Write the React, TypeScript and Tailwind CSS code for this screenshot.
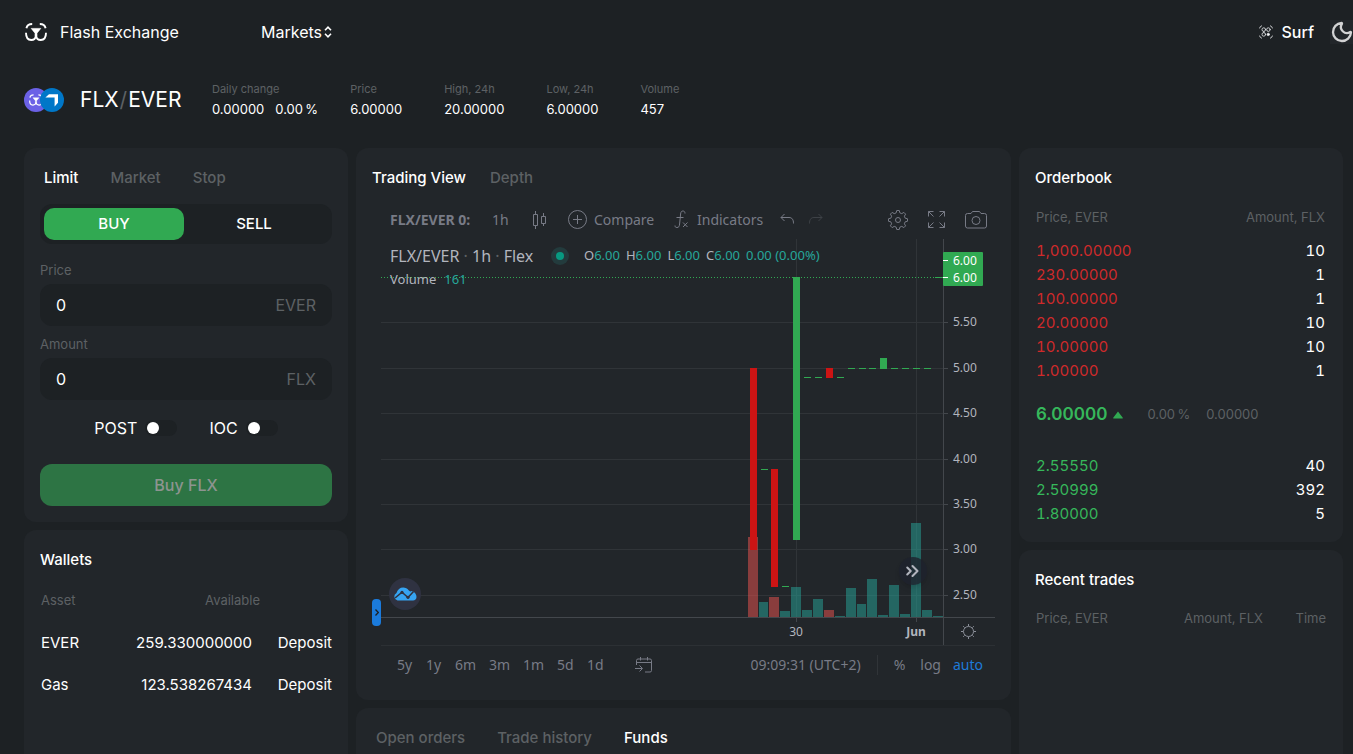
import type { ReactNode } from "react";
import { ChevronRight, Moon } from "lucide-react";

const inter = "font-['Inter',sans-serif]";
const chartFont = "font-['Noto_Sans',sans-serif]";

function BearMark({ className }: { className: string }) {
  return (
    <svg viewBox="0 0 22 18" className={className} fill="none" stroke="currentColor" strokeWidth="1.9">
      <path d="M1.4 5.2C2 2.400 4 1 7.200 1" />
      <path d="M20.600 5.200C20 2.400 18 1 14.800 1" />
      <path d="M1 9.800C1 14.400 3 17 6.200 17C8.800 17 10.600 15.600 11 12.600C11.400 15.600 13.200 17 15.800 17C19 17 21 14.400 21 9.800" />
      <path d="M6.200 5.400h9.600L12 10.200v3.200h-2v-3.200Z" fill="currentColor" strokeWidth="0.600" strokeLinejoin="round" />
    </svg>
  );
}

function SurfMark() {
  return (
    <svg viewBox="0 0 14 14" className="size-[14px]" fill="none" stroke="#d6d8da" strokeWidth="0.9" strokeLinecap="round">
      <circle cx="4.8" cy="4.6" r="1.8" />
      <circle cx="9.4" cy="4.6" r="1.8" />
      <circle cx="4.8" cy="9.4" r="1.8" />
      <circle cx="9.3" cy="9.4" r="1.2" fill="#fff" />
      <path d="M.6 3Q.8 1.400 2.600.8M13.400 3Q13.200 1.400 11.400.8M.6 11Q.8 12.600 2.600 13.200M13.400 11Q13.200 12.600 11.400 13.200" />
      <path d="M4.800 6.400v1.200" />
    </svg>
  );
}

function Header() {
  return (
    <header className="flex h-16 shrink-0 items-center pl-6">
      <a href="#home" className="flex w-[237px] items-center">
        <BearMark className="ml-px h-[18px] w-[22px]" />
        <span className="ml-[13px] text-base">Flash Exchange</span>
      </a>
      <button className="flex items-center gap-[2px] text-base">
        Markets
        <svg viewBox="0 0 8 12" className="h-3 w-2" fill="none" stroke="currentColor" strokeWidth="1.6">
          <path d="M1 4.2L4 1.2L7 4.2M1 7.8L4 10.8L7 7.8" />
        </svg>
      </button>
      <button className="ml-auto flex items-center gap-[9px] text-base font-medium">
        <SurfMark />
        Surf
      </button>
      <button aria-label="Dark theme" className="ml-4 flex h-6 w-[23px] items-center bg-[#22262a] text-[#d2d3d4]">
        <Moon className="size-6 shrink-0" strokeWidth={2.3} />
      </button>
    </header>
  );
}

function Stat({ label, values }: { label: string; values: string[] }) {
  return (
    <div className="mr-8">
      <dt className="text-[11px] leading-5 text-[#5d6164]">{label}</dt>
      <dd className="flex text-[13px] leading-5">
        {values.map((v) => (
          <span key={v} className="mr-[11px] last:mr-0">
            {v}
          </span>
        ))}
      </dd>
    </div>
  );
}

function PairBar() {
  return (
    <section className="flex h-[84px] shrink-0 pt-[15px] pl-6">
      <div className="flex h-[42px] w-[188px] items-center">
        <span className="flex size-6 items-center justify-center rounded-full bg-[#6b61e6]">
          <BearMark className="h-[12px] w-[14px]" />
        </span>
        <svg viewBox="0 0 24 24" className="-ml-2 size-6">
          <circle cx="12" cy="12" r="12" fill="#0077c8" />
          <path d="M5.4 9.6L9 6.2h9v8.6l-3.4 3.6V9.6Z" fill="#fff" />
        </svg>
        <h1 className="ml-4 flex gap-px text-[21px] leading-8">
          FLX<span className="text-[#5d6164]">/</span>EVER
        </h1>
      </div>
      <dl className="flex">
        <Stat label="Daily change" values={["0.00000", "0.00\u2009%"]} />
        <div className="flex gap-[10px]">
          <Stat label="Price" values={["6.00000"]} />
          <Stat label="High, 24h" values={["20.00000"]} />
          <Stat label="Low, 24h" values={["6.00000"]} />
          <Stat label="Volume" values={["457"]} />
        </div>
      </dl>
    </section>
  );
}

function Card({ children, className = "" }: { children: ReactNode; className?: string }) {
  return <section className={`rounded-xl bg-[#22262a] p-4 ${className}`}>{children}</section>;
}

function Field({ id, label, unit }: { id: string; label: string; unit: string }) {
  return (
    <div>
      <label htmlFor={id} className="block text-[13px] leading-5 text-[#5d6164]">
        {label}
      </label>
      <div className="mt-1 flex h-[42px] items-center rounded-xl bg-[#1d2124] px-4 text-base">
        <input id={id} defaultValue="0" className="min-w-0 flex-1 bg-transparent outline-none" />
        <span className="text-[#5d6164]">{unit}</span>
      </div>
    </div>
  );
}

function Toggle({ label }: { label: string }) {
  return (
    <label className="flex items-center gap-2 text-base">
      {label}
      <input type="checkbox" role="switch" className="peer sr-only" />
      <span className="flex h-4 w-8 items-center rounded-full bg-[#1d2124] px-[2px] peer-checked:justify-end">
        <span className="size-3 rounded-full bg-white" />
      </span>
    </label>
  );
}

function OrderForm() {
  return (
    <Card>
      <div className="flex h-7 items-center gap-8 px-1 text-[15px] font-medium text-[#5d6164]">
        <button className="text-white">Limit</button>
        <button>Market</button>
        <button>Stop</button>
      </div>
      <div className="mt-3 grid h-10 grid-cols-2 rounded-xl bg-[#1d2124] py-1 pr-2 pl-1 text-[15px] font-medium">
        <button className="rounded-[10px] bg-[#31a952]">BUY</button>
        <button>SELL</button>
      </div>
      <div className="mt-4 flex flex-col gap-2">
        <Field id="price" label="Price" unit="EVER" />
        <Field id="amount" label="Amount" unit="FLX" />
      </div>
      <div className="mt-4 flex h-6 items-center justify-center gap-8">
        <Toggle label="POST" />
        <Toggle label="IOC" />
      </div>
      <button className="mt-6 h-[42px] w-full rounded-xl bg-[#2d7444] text-base font-medium text-[#8d9490]">Buy FLX</button>
    </Card>
  );
}

function Wallets() {
  const rows = [
    ["EVER", "259.330000000"],
    ["Gas", "123.538267434"],
  ];
  return (
    <Card className="min-h-60 flex-1">
      <h2 className="h-7 text-[15px] leading-7 font-medium">Wallets</h2>
      <table className="mt-[6px] w-full text-[15px]">
        <thead className="text-[13px] text-[#5d6164]">
          <tr className="h-[42px]">
            <th className="pl-px text-left font-normal">Asset</th>
            <th className="pr-[72px] text-right font-normal" colSpan={2}>
              Available
            </th>
          </tr>
        </thead>
        <tbody>
          {rows.map(([name, value]) => (
            <tr key={name} className="h-[42px]">
              <td className="pl-px">{name}</td>
              <td className="text-right">{value}</td>
              <td className="w-20 text-right">
                <button>Deposit</button>
              </td>
            </tr>
          ))}
        </tbody>
      </table>
    </Card>
  );
}

const UP = "#31a952";
const DOWN = "#cc1414";
const priceLines: [number, string][] = [
  [83, "5.50"],
  [129, "5.00"],
  [174, "4.50"],
  [220, "4.00"],
  [265, "3.50"],
  [310, "3.00"],
  [356, "2.50"],
];
// x, top, height, rising
const candles: [number, number, number, boolean][] = [
  [369, 129, 182, false],
  [380, 230, 1, true],
  [390, 230, 118, false],
  [401, 347, 1, true],
  [412, 38, 263, true],
  [423, 138, 1, true],
  [434, 138, 1, true],
  [445, 129, 10, false],
  [456, 138, 1, true],
  [467, 129, 1, true],
  [478, 129, 1, true],
  [488, 129, 1, true],
  [499, 119, 11, true],
  [510, 129, 1, true],
  [521, 129, 1, true],
  [532, 129, 1, true],
  [543, 129, 1, true],
];
// x, width, height, rising
const volumes: [number, number, number, boolean][] = [
  [367, 10, 80, false],
  [378, 9, 15, true],
  [388, 10, 20, false],
  [399, 10, 6, true],
  [410, 10, 30, true],
  [421, 10, 7, true],
  [432, 10, 18, true],
  [443, 10, 7, false],
  [454, 10, 1, true],
  [465, 10, 29, true],
  [476, 9, 13, true],
  [486, 10, 38, true],
  [497, 10, 2, true],
  [508, 10, 32, true],
  [519, 10, 3, true],
  [530, 10, 94, true],
  [541, 10, 7, true],
  [552, 10, 1, true],
];

function PriceChart() {
  return (
    <svg viewBox="0 0 614 407" className={`block w-full ${chartFont}`} fontSize="12" fill="#b2b5be">
      <g fill="#303438">
        {priceLines.map(([y]) => (
          <rect key={y} x="0" y={y} width="562" height="1" />
        ))}
        <rect x="415" y="0" width="1" height="378" />
        <rect x="535" y="0" width="1" height="378" />
        <rect x="0" y="406" width="614" height="1" fill="#2c3034" />
      </g>
      {volumes.map(([x, w, h, up]) => (
        <rect key={x} x={x} y={378 - h} width={w} height={h} fill={up ? "#26a69a" : "#ef5350"} opacity="0.5" />
      ))}
      <g fill="#43474c">
        <rect x="562" y="0" width="1" height="406" />
        <rect x="0" y="378" width="614" height="1" />
        <rect x="415" y="378" width="1" height="5" />
        <rect x="535" y="378" width="1" height="5" />
        {priceLines.map(([y]) => (
          <rect key={y} x="562" y={y} width="5" height="1" />
        ))}
      </g>
      <path d="M0 38.5H554" stroke={UP} strokeDasharray="1 2" />
      <path d="M554 38.5H562" stroke={UP} />
      {candles.map(([x, y, h, up]) => (
        <rect key={x} x={x} y={y} width="7" height={h} fill={up ? UP : DOWN} />
      ))}
      {priceLines.map(([y, label]) => (
        <text key={y} x="572" y={y + 4}>
          {label}
        </text>
      ))}
      <rect x="562" y="13" width="40" height="34" rx="1" fill={UP} />
      <path d="M562 21.5h5M562 38.5h5" stroke="#fff" />
      <text x="572" y="26" fill="#fff">
        6.00
      </text>
      <text x="572" y="43" fill="#fff">
        6.00
      </text>
      <text x="415" y="397" textAnchor="middle">
        30
      </text>
      <text x="535" y="397" textAnchor="middle" fontWeight="700">
        Jun
      </text>
      <g fill="none" stroke="#8b8f99">
        <circle cx="587.5" cy="392.5" r="5" />
        <path d="M587.5 385v2M587.5 398v2M580 392.5h2M593 392.5h2M582.2 387.2l1.4 1.4M591.4 396.4l1.4 1.4M582.2 397.8l1.4-1.4M591.4 388.6l1.4-1.4" />
      </g>
    </svg>
  );
}

function ToolbarIcon({ w, h, children }: { w: string; h: string; children: ReactNode }) {
  return (
    <svg viewBox={`0 0 ${w} ${h}`} width={w} height={h} fill="none" stroke="currentColor" className="shrink-0">
      {children}
    </svg>
  );
}

const gearPath = (() => {
  const points: string[] = [];
  for (let i = 0; i < 8; i++) {
    [
      [-0.25, 7.4],
      [-0.13, 9.6],
      [0.13, 9.6],
      [0.25, 7.4],
    ].forEach(([offset, r]) => {
      const a = (i * Math.PI) / 4 + offset;
      points.push(`${(10 + r * Math.sin(a)).toFixed(2)} ${(10 - r * Math.cos(a)).toFixed(2)}`);
    });
  }
  return `M${points.join("L")}Z`;
})();

function ChartToolbar() {
  return (
    <div className={`flex h-[39px] items-center pr-2 pl-[18px] text-sm text-[#787b86] ${chartFont}`}>
      <button className="w-[102px] text-left font-bold">FLX/EVER 0:</button>
      <button className="w-10 text-left">1h</button>
      <button aria-label="Chart type" className="w-9">
        <ToolbarIcon w="15" h="20">
          <path d="M3.500 1v3M3.500 16v3M1.500 4.500h4v11h-4ZM11.500 3v3M11.500 13v3M9.500 6.500h4v7h-4Z" />
        </ToolbarIcon>
      </button>
      <button className="flex w-[106px] items-center gap-[6px]">
        <ToolbarIcon w="20" h="20">
          <circle cx="9.500" cy="9.500" r="9" />
          <path d="M5 9.500h9M9.500 5v9" />
        </ToolbarIcon>
        Compare
      </button>
      <button className="flex w-[106px] items-center gap-2">
        <ToolbarIcon w="15" h="19">
          <path d="M11 3.5C11 1.4 9.800 1 8.900 1C7.400 1 6.800 2 6.600 4L5.600 14C5.400 16.500 4.600 17.500 3 17.500C1.600 17.500 1 17 1 15.500M2.500 7.500h7M9 12.500l4.500 4.500M13.500 12.500L9 17" />
        </ToolbarIcon>
        Indicators
      </button>
      <button aria-label="Undo" className="w-7">
        <ToolbarIcon w="15" h="13">
          <path d="M4.500 1L1 4.500L4.500 8M1 4.500h8C12 4.500 13.500 6.500 13.500 10.500" />
        </ToolbarIcon>
      </button>
      <button aria-label="Redo" className="text-[#3d4146]">
        <ToolbarIcon w="15" h="13">
          <path d="M10.500 1L14 4.500L10.500 8M14 4.500H6C3 4.500 1.500 6.500 1.500 10.500" />
        </ToolbarIcon>
      </button>
      <div className="ml-auto flex items-center gap-5">
        <button aria-label="Settings">
          <ToolbarIcon w="20" h="20">
            <path d={gearPath} strokeLinejoin="round" />
            <circle cx="10" cy="10" r="2.5" />
          </ToolbarIcon>
        </button>
        <button aria-label="Full screen">
          <ToolbarIcon w="17" h="17">
            <path d="M.500 5.500v-5h5M.500.500l5 5M11.500.500h5v5M16.500.500l-5 5M.500 11.500v5h5M.500 16.500l5-5M16.500 11.500v5h-5M16.500 16.500l-5-5" />
          </ToolbarIcon>
        </button>
        <button aria-label="Take a snapshot">
          <ToolbarIcon w="22" h="18">
            <path d="M2.500 2.500H6L7.500.500h7L16 2.500h3.500a2 2 0 0 1 2 2v10.500a2 2 0 0 1-2 2h-17a2 2 0 0 1-2-2V4.500a2 2 0 0 1 2-2Z" />
            <circle cx="11" cy="9.500" r="4" />
          </ToolbarIcon>
        </button>
      </div>
    </div>
  );
}

function ChartLegend() {
  const ohlc = ["O", "H", "L", "C"];
  return (
    <div className="absolute top-[5px] left-[9px] text-[#b2b5be]">
      <div className="flex h-6 items-center text-base">
        <span className="w-[161px] whitespace-nowrap">
          FLX/EVER <i className="text-[#5d6164] not-italic">·</i> 1h <i className="text-[#5d6164] not-italic">·</i> Flex
        </span>
        <span className="flex size-[18px] items-center justify-center rounded-full bg-[#233b3d]">
          <span className="size-2 rounded-full bg-[#089981]" />
        </span>
        <div className="ml-[15px] flex gap-[6px] text-[13px]">
          {ohlc.map((k) => (
            <span key={k}>
              {k}
              <span className="text-[#26a69a]">6.00</span>
            </span>
          ))}
          <span className="text-[#26a69a]">0.00 (0.00%)</span>
        </div>
      </div>
      <div className="flex h-6 items-center gap-2 text-[13px]">
        Volume <span className="text-[#26a69a]">161</span>
      </div>
    </div>
  );
}

function ChartFooter() {
  const ranges = [
    ["5y", "w-[29px]"],
    ["1y", "w-[29px]"],
    ["6m", "w-[34px]"],
    ["3m", "w-[34px]"],
    ["1m", "w-[34px]"],
    ["5d", "w-[30px]"],
    ["1d", "w-12"],
  ];
  return (
    <div className={`flex h-[38px] items-center pr-3 pl-[25px] text-sm text-[#787b86] ${chartFont}`}>
      {ranges.map(([label, width]) => (
        <button key={label} className={`${width} text-left`}>
          {label}
        </button>
      ))}
      <button aria-label="Go to date">
        <ToolbarIcon w="18" h="16">
          <path d="M1.500 8V3.500a1.500 1.500 0 0 1 1.500-1.500h12a1.500 1.500 0 0 1 1.500 1.500v10a1.500 1.500 0 0 1-1.500 1.500H10M1.500 5.500h15M5.500 0v3.500M12.500 0v3.500M0 11.500h7M4.500 8.500l3 3l-3 3" />
        </ToolbarIcon>
      </button>
      <div className="ml-auto flex items-center">
        <button>09:09:31 (UTC+2)</button>
        <span className="mx-4 h-5 w-px bg-[#303438]" />
        <button>%</button>
        <button className="ml-[15px]">log</button>
        <button className="ml-3 text-[#1e7ad8]">auto</button>
      </div>
    </div>
  );
}

function ChartCard() {
  return (
    <Card>
      <div className="flex h-7 items-center gap-6 text-[15px] font-medium">
        <button>Trading View</button>
        <button className="text-[#5d6164]">Depth</button>
      </div>
      <div className="mt-2">
        <ChartToolbar />
        <div className={`relative ml-[9px] ${chartFont}`}>
          <PriceChart />
          <ChartLegend />
          <span className="absolute bottom-9 left-2 flex size-8 items-center justify-center rounded-full bg-[#2f3241]">
            <svg viewBox="0 0 24 14" className="h-[14px] w-6">
              <path
                d="M4.500 13.500A4 4 0 0 1 3.500 6C4.500 2.500 7 .5 10.200.5c2.300 0 4.200 1 5.400 2.700l1.600 1.300 1.800-.6C22 5 23.500 7.500 23.500 10c0 2-1.500 3.500-3.500 3.500Z"
                fill="#36a4f2"
              />
              <path d="M2 11L9 5.200L15 10.500L20.500 4.500" stroke="#2f3241" strokeWidth="1.600" fill="none" />
              <circle cx="9" cy="5.400" r="1.600" fill="#2f3241" />
              <circle cx="15" cy="10.300" r="1.600" fill="#2f3241" />
            </svg>
          </span>
          <button
            aria-label="Show drawing tools"
            className="absolute bottom-5 -left-[9px] flex h-[27px] w-[9px] items-center justify-center rounded-[4px] bg-[#1b7bdc] text-[#1d2124]"
          >
            <svg viewBox="0 0 4 7" className="h-[7px] w-1" fill="none" stroke="currentColor" strokeWidth="1.300">
              <path d="M.5.500L3.300 3.500L.5 6.500" />
            </svg>
          </button>
          <button
            aria-label="Scroll to the latest bar"
            className="absolute right-[68px] bottom-[61px] flex size-7 items-center justify-center rounded-full bg-[#1e222d]/80 text-[#b2b5be] shadow-md"
          >
            <ChevronRight className="-mr-[6px] size-[14px]" strokeWidth={3.5} />
            <ChevronRight className="-ml-[5px] size-5" strokeWidth={2.5} />
          </button>
        </div>
        <ChartFooter />
      </div>
    </Card>
  );
}

function OrdersCard() {
  return (
    <Card className="min-h-14 flex-1">
      <div className="flex h-7 items-center gap-8 px-1 text-[15px] font-medium text-[#5d6164]">
        <button>Open orders</button>
        <button>Trade history</button>
        <button className="text-white">Funds</button>
      </div>
    </Card>
  );
}

function BookRows({ rows, color }: { rows: [string, string][]; color: string }) {
  return (
    <tbody className="tabular-nums">
      {rows.map(([price, amount]) => (
        <tr key={price} className="h-6">
          <td className={`pl-px ${color}`}>{price}</td>
          <td className="pr-[2px] text-right">{amount}</td>
        </tr>
      ))}
    </tbody>
  );
}

function Orderbook() {
  return (
    <Card>
      <h2 className="h-7 text-[15px] leading-7 font-medium">Orderbook</h2>
      <table className="mt-3 w-full text-[15px]">
        <thead className="text-[13px] text-[#5d6164]">
          <tr className="h-[35px] align-top leading-[26px]">
            <th className="pl-px text-left font-normal">Price, EVER</th>
            <th className="pr-[2px] text-right font-normal">Amount, FLX</th>
          </tr>
        </thead>
        <BookRows
          color="text-[#cf2a2a]"
          rows={[
            ["1,000.00000", "10"],
            ["230.00000", "1"],
            ["100.00000", "1"],
            ["20.00000", "10"],
            ["10.00000", "10"],
            ["1.00000", "1"],
          ]}
        />
      </table>
      <div className="mt-5 mb-[27px] flex h-6 items-center pl-px text-[13px] text-[#5d6164]">
        <strong className="text-[17px] font-semibold text-[#36b85b]">6.00000</strong>
        <svg viewBox="0 0 10 8" className="ml-[6px] h-2 w-[10px]" fill="#31a952">
          <path d="M5 .6L9.600 6.600a.5.5 0 0 1-.4.9H.8a.5.5 0 0 1-.4-.9Z" />
        </svg>
        <span className="ml-6">{"0.00\u2009%"}</span>
        <span className="ml-4">0.00000</span>
      </div>
      <table className="w-full text-[15px]">
        <BookRows
          color="text-[#36b85b]"
          rows={[
            ["2.55550", "40"],
            ["2.50999", "392"],
            ["1.80000", "5"],
          ]}
        />
      </table>
    </Card>
  );
}

function RecentTrades() {
  return (
    <Card className="min-h-52 flex-1">
      <h2 className="h-7 text-[15px] leading-7 font-medium">Recent trades</h2>
      <table className="mt-3 w-full text-[13px] text-[#5d6164]">
        <thead>
          <tr className="h-[26px]">
            <th className="pl-px text-left font-normal">Price, EVER</th>
            <th className="text-right font-normal">Amount, FLX</th>
            <th className="w-16 pr-px text-right font-normal">Time</th>
          </tr>
        </thead>
      </table>
    </Card>
  );
}

export default function App() {
  return (
    <div className={`flex h-screen flex-col overflow-hidden bg-[#1d2124] text-white ${inter}`}>
      <Header />
      <PairBar />
      <main className="grid flex-1 grid-cols-[324px_minmax(0,1fr)_324px] gap-2 pr-[10px] pl-6">
        <div className="flex flex-col gap-2">
          <OrderForm />
          <Wallets />
        </div>
        <div className="flex flex-col gap-2">
          <ChartCard />
          <OrdersCard />
        </div>
        <div className="flex flex-col gap-2">
          <Orderbook />
          <RecentTrades />
        </div>
      </main>
    </div>
  );
}
